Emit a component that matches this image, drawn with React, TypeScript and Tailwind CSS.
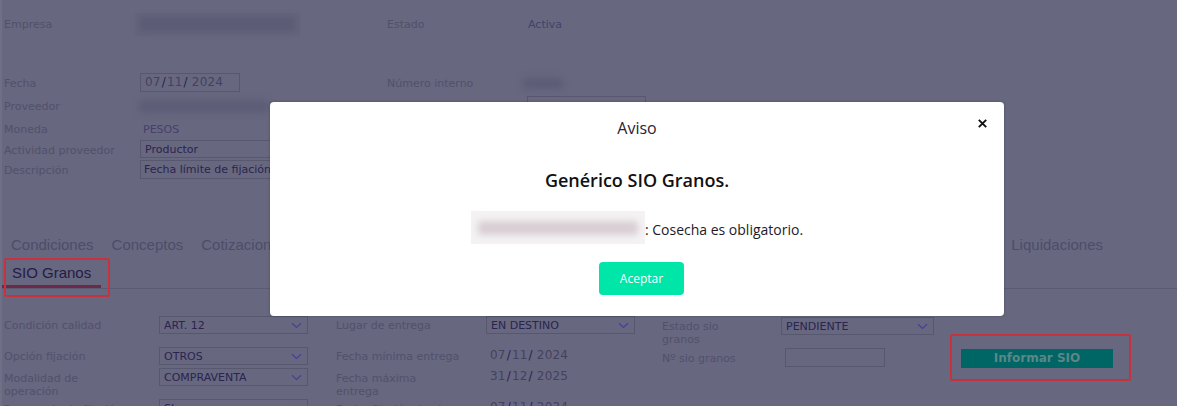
import React from "react";

const Chevron = () => (
  <svg width="11" height="7" viewBox="0 0 11 7" className="shrink-0">
    <path d="M1 1.2 L5.5 5.5 L10 1.2" stroke="#4a3f94" strokeWidth="1.2" fill="none" />
  </svg>
);

const DateText = ({ d, m, y }: { d: string; m: string; y: string }) => (
  <span className="text-[12px] tracking-[0.2px] text-[#45415f]">
    {d}
    <span className="mx-[1px] text-[#2a2150]">/</span>
    {m}
    <span className="ml-[1px] mr-[4px] text-[#2a2150]">/</span>
    {y}
  </span>
);

const Select = ({ value, className }: { value: string; className: string }) => (
  <div
    className={
      "flex h-[18px] items-center justify-between border border-[#57576f] pl-[4px] pr-[5px] text-[#2a2450] " +
      className
    }
  >
    <span>{value}</span>
    <Chevron />
  </div>
);

const Blur = ({ className, inner }: { className: string; inner: string }) => (
  <div className={"flex items-center justify-center " + className}>
    <div className={"rounded-[3px] blur-[3px] " + inner} />
  </div>
);

export default function App() {
  const hiddenTabs = [
    "Cotizaciones",
    "Fijaciones",
    "Entregas",
    "Facturas",
    "Retenciones",
    "Documentos",
    "Observaciones",
    "Anticipos",
  ];
  return (
    <div className="relative h-[406px] w-[1177px] overflow-hidden border-l-2 border-[#6f6f88] bg-[#67677f] font-['DejaVu_Sans',sans-serif] text-[11px] leading-[13px] text-[#51516c]">
      {/* Top section */}
      <div className="grid grid-cols-[136px_247px_140px_1fr] pl-[2px] pt-[12px]">
        <div className="flex h-[24px] items-center">Empresa</div>
        <div className="flex h-[24px] items-center">
          <Blur className="-ml-[5px] h-[23px] w-[165px] bg-[#64647c]" inner="h-[14px] w-[155px] bg-[#5b5b75]" />
        </div>
        <div className="flex h-[24px] items-center">Estado</div>
        <div className="flex h-[24px] items-center pl-[1px] text-[#45416a]">Activa</div>

        <div className="col-span-4 h-[37px]" />

        <div className="flex h-[21px] items-center">Fecha</div>
        <div className="flex h-[21px] items-start">
          <div className="flex h-[19px] w-[100px] items-center border border-[#57576f] pl-[4px]">
            <DateText d="07" m="11" y="2024" />
          </div>
        </div>
        <div className="flex h-[21px] items-center">Número interno</div>
        <div className="flex h-[21px] items-center">
          <Blur className="-ml-[20px] h-[16px] w-[59px]" inner="h-[11px] w-[40px] translate-x-[6px] bg-[#5c5c76]" />
        </div>

        <div className="flex h-[24px] items-center">Proveedor</div>
        <div className="flex h-[24px] items-center">
          <Blur className="-ml-[4px] h-[17px] w-[136px]" inner="h-[13px] w-[130px] bg-[#5d5d77]" />
        </div>
        <div className="h-[24px]" />
        <div className="h-[24px] pt-[2px]">
          <div className="h-[19px] w-[119px] border border-[#57576f]" />
        </div>

        <div className="flex h-[22px] items-center">Moneda</div>
        <div className="col-span-3 flex h-[22px] items-center pl-[3px] text-[#45416a]">PESOS</div>

        <div className="flex h-[20px] items-center">Actividad proveedor</div>
        <div className="col-span-3 h-[20px]">
          <div className="flex h-[18px] w-[240px] items-center border border-[#57576f] pl-[4px] text-[#2a2450]">
            Productor
          </div>
        </div>

        <div className="flex h-[20px] items-center">Descripción</div>
        <div className="col-span-3 h-[20px]">
          <div className="flex h-[19px] w-[240px] items-center border border-[#57576f] pl-[3px] text-[#2a2450]">
            Fecha límite de fijación
          </div>
        </div>
      </div>

      {/* Tabs */}
      <div className="relative mt-[52px] border-b border-[#5a5a72]">
        <div className="flex flex-wrap font-['Liberation_Sans',Arial,sans-serif] text-[15px] text-[#4d4d6a]">
          <div className="flex h-[28px] items-center border-b-[3px] border-transparent px-[9px]">Condiciones</div>
          <div className="flex h-[28px] items-center border-b-[3px] border-transparent px-[9px]">Conceptos</div>
          <div className="flex h-[28px] w-[810px] overflow-hidden">
            {hiddenTabs.map((t) => (
              <div key={t} className="flex h-[28px] shrink-0 items-center border-b-[3px] border-transparent px-[9px]">
                {t}
              </div>
            ))}
          </div>
          <div className="flex h-[28px] items-center border-b-[3px] border-transparent px-[9px]">Liquidaciones</div>
          <div className="flex h-[28px] items-center border-b-[3px] border-[#6c2a48] px-[10px] text-[#231c48]">
            SIO Granos
          </div>
        </div>
        <div className="absolute left-[2px] top-[26px] h-[39px] w-[106px] rounded-[2px] border-2 border-[#c6323e]" />
      </div>

      {/* Form */}
      <div className="mt-[27px] grid grid-cols-[155px_177px_150px_176px_119px_153px_1fr] pl-[2px]">
        {/* Row 1 */}
        <div className="h-[31px] pt-[3px]">Condición calidad</div>
        <div className="h-[31px]">
          <Select value="ART. 12" className="w-[149px]" />
        </div>
        <div className="h-[31px] pt-[3px]">Lugar de entrega</div>
        <div className="h-[31px]">
          <Select value="EN DESTINO" className="w-[149px]" />
        </div>
        <div className="h-[31px] pt-[4px]">
          Estado sio
          <br />
          granos
        </div>
        <div className="h-[31px] pt-[1px]">
          <Select value="PENDIENTE" className="w-[153px]" />
        </div>
        <div className="h-[31px]" />

        {/* Row 2 */}
        <div className="h-[21px] pt-[3px]">Opción fijación</div>
        <div className="h-[21px]">
          <Select value="OTROS" className="w-[149px]" />
        </div>
        <div className="h-[21px] pt-[3px]">Fecha mínima entrega</div>
        <div className="h-[21px] pl-[4px] pt-[2px]">
          <DateText d="07" m="11" y="2024" />
        </div>
        <div className="h-[21px] pt-[5px]">Nº sio granos</div>
        <div className="h-[21px] pl-[4px] pt-[1px]">
          <div className="h-[19px] w-[100px] border border-[#57576f]" />
        </div>
        <div className="relative h-[21px]">
          <div className="absolute left-[16px] top-[-13px] h-[47px] w-[181px] rounded-[2px] border-2 border-[#c6323e]" />
          <div className="ml-[27px] mt-[2px] flex h-[19px] w-[152px] items-center justify-center bg-[#006565] text-[12px] font-bold text-[#5b8787]">
            Informar SIO
          </div>
        </div>

        {/* Row 3 */}
        <div className="h-[31px] pt-[4px]">
          Modalidad de
          <br />
          operación
        </div>
        <div className="h-[31px]">
          <Select value="COMPRAVENTA" className="w-[149px]" />
        </div>
        <div className="h-[31px] pt-[4px]">
          Fecha máxima
          <br />
          entrega
        </div>
        <div className="h-[31px] pl-[4px] pt-[2px]">
          <DateText d="31" m="12" y="2025" />
        </div>
        <div className="h-[31px]" />
        <div className="h-[31px]" />
        <div className="h-[31px]" />

        {/* Row 4 */}
        <div className="h-[31px] pt-[4px]">Porcentaje de fijación</div>
        <div className="h-[31px]">
          <Select value="SI" className="w-[149px]" />
        </div>
        <div className="h-[31px] pt-[4px]">Fecha fijación desde</div>
        <div className="h-[31px] pl-[4px] pt-[2px]">
          <DateText d="07" m="11" y="2024" />
        </div>
        <div className="h-[31px]" />
        <div className="h-[31px]" />
        <div className="h-[31px]" />
      </div>

      {/* Modal */}
      <div className="absolute left-[268px] top-[102px] flex h-[214px] w-[734px] flex-col items-center rounded-[4px] bg-white font-['Open_Sans',sans-serif] shadow-[0_0_3px_rgba(0,0,0,0.25)]">
        <button className="absolute right-[17px] top-[17px] flex h-[9px] w-[9px] items-center justify-center" aria-label="Cerrar">
          <svg width="9" height="9" viewBox="0 0 9 9">
            <path d="M0.8 0.8 L8.2 8.2 M8.2 0.8 L0.8 8.2" stroke="#111" strokeWidth="1.9" />
          </svg>
        </button>
        <div className="mt-[15px] text-[16px] leading-[22px] text-[#2b2233]">Aviso</div>
        <div className="mt-[29px] text-[18px] font-semibold leading-[24px] text-[#111]">Genérico SIO Granos.</div>
        <div className="mt-[19px] flex h-[33px] items-center text-[14px] leading-[22px] text-[#1e1a28]">
          <span className="flex h-[33px] w-[174px] items-center justify-center bg-[#f4f2f3]">
            <span className="h-[14px] w-[160px] rounded-[4px] bg-[#d8ced3] blur-[3px]" />
          </span>
          <span className="pt-[5px]">: Cosecha es obligatorio.</span>
        </div>
        <button className="ml-[9px] mt-[18px] h-[33px] w-[85px] rounded-[4px] bg-[#00e6a8] text-[12px] text-white">
          Aceptar
        </button>
      </div>
    </div>
  );
}
